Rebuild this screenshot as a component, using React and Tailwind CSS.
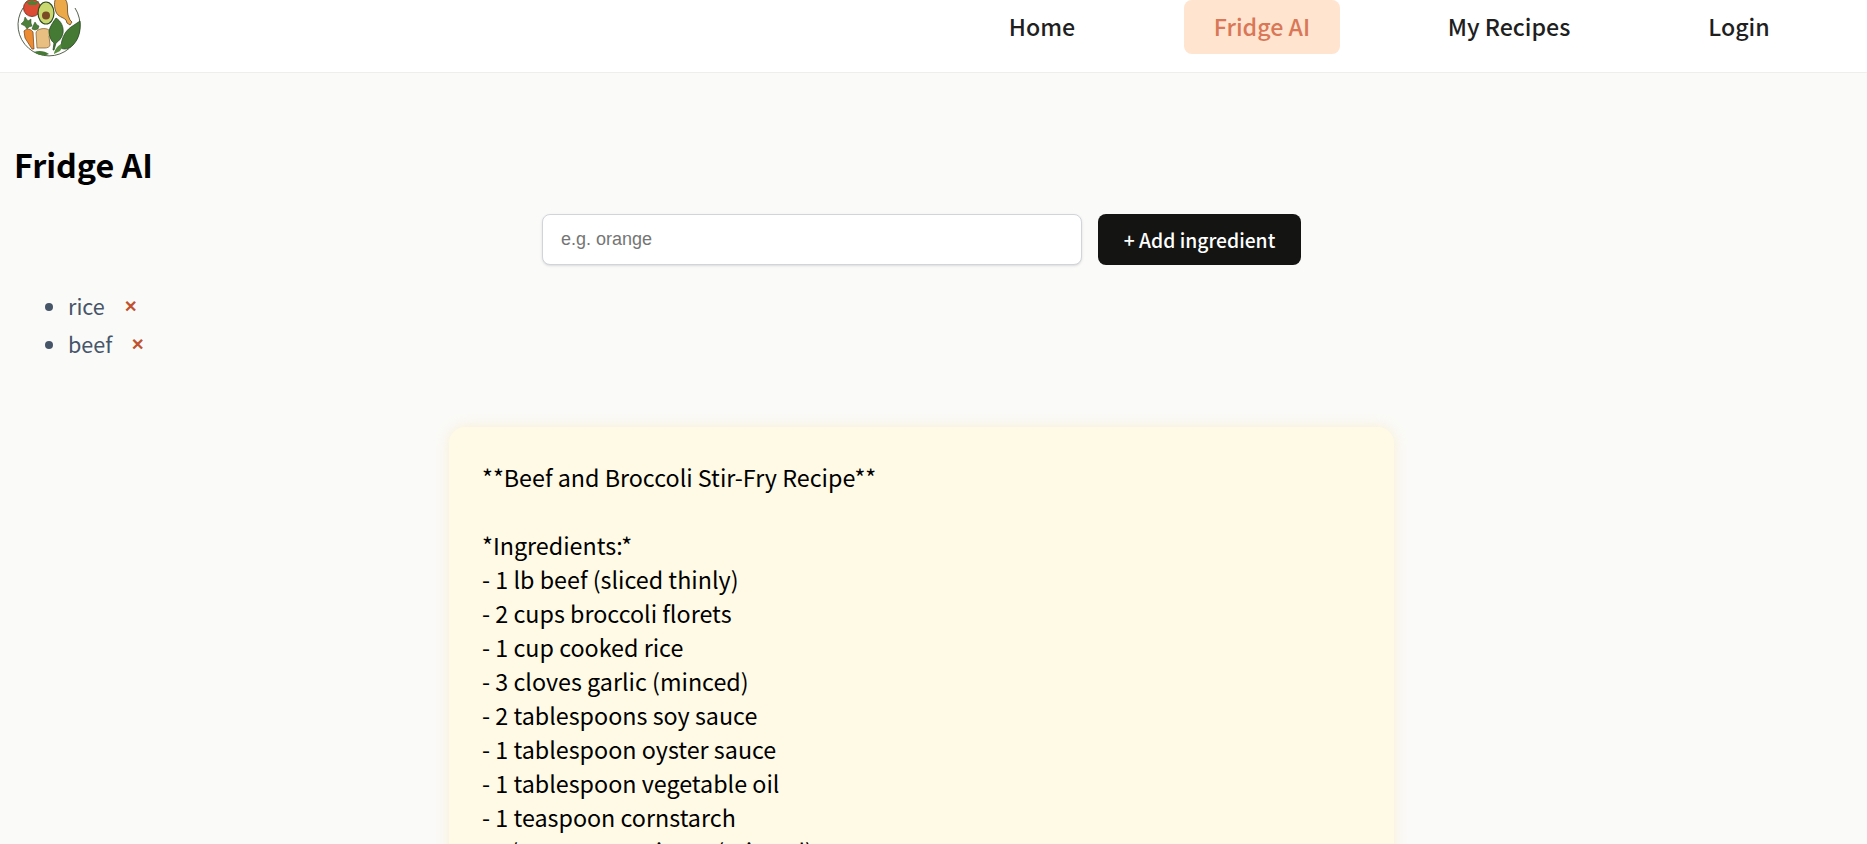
export default function App() {
  return (
    <div className="h-[844px] overflow-hidden bg-[#fafaf8] font-['Noto_Sans_CJK_JP',sans-serif]">
      <header className="flex h-[73px] items-start justify-between border-b border-[#eeeeec] bg-white pl-[16px]">
        <svg viewBox="16 0 66 60" className="h-[60px] w-[66px]">
          <path d="M23 8A31 31 0 1 0 75 8" fill="#fff" stroke="#3f4f36" strokeWidth="0.9" />
          <path d="M56 -2c5 -2 10 0 11 5 1 4 0 8 1 12l2 5 2 2-2 3-3-2-1-3c-3-3-8-3-10-8-2-5-2-11 0-14z" fill="#eca94a" stroke="#5b4426" strokeWidth=".8" />
          <circle cx="32" cy="8" r="8.5" fill="#dc4b34" stroke="#6b2b1c" strokeWidth=".8" />
          <path d="M26 1l4 1 2-3 2 3 5-1-3 4h-7z" fill="#4b8035" />
          <ellipse cx="46" cy="13" rx="8" ry="11" fill="#c9d86f" stroke="#2f4a22" strokeWidth="1.2" />
          <circle cx="46" cy="15.5" r="4" fill="#7a4a27" />
          <path d="M25 17l3 4 3-2 0 4 1 3-3 1-2 2-2-3-4-2 3-3z" fill="#4c7f39" stroke="#2f4a22" strokeWidth=".5" />
          <path d="M35 22l2 3 2 1-1 3-3 1-3-1 1-3z" fill="#4c7f39" stroke="#2f4a22" strokeWidth=".5" />
          <path d="M24 31c3-3 7-2 9 1l1 17-2 0-7-11z" fill="#ec8b32" stroke="#6b3d18" strokeWidth=".7" />
          <path d="M36 33c0-4 9-6 13-3 2 2 1 5 0 6l1 9c0 2-3 3-5 3l-8 0z" fill="#e8bf80" stroke="#7a5a30" strokeWidth=".7" />
          <path d="M56 18c5 3 8 9 7 15-1 5-4 8-7 10l-2 7-1 0 1-7c-3-2-5-7-5-12 1-5 5-10 7-13z" fill="#447a33" stroke="#24421c" strokeWidth=".7" />
          <path d="M80 21c1 9-1 18-7 24-4 4-9 5-12 3 0-8 3-16 10-21 3-2 6-4 9-6z" fill="#447a33" stroke="#24421c" strokeWidth=".7" />
          <path d="M61 44c1 2 1 5-1 7l-6 3c0-3 3-8 7-10z" fill="#5a9040" />
          <path d="M34 52c5-2 11-1 15 2-4 2-10 2-15-2z" fill="#447a33" />
        </svg>
        <nav className="flex items-start pr-[67px] text-[23.2px] font-medium text-[#1f1f1f]">
          <a className="flex h-[54px] w-[284px] items-center justify-center pb-[2px]">Home</a>
          <a className="flex h-[54px] w-[156px] items-center justify-center rounded-lg bg-[#ffe4d0] pb-[2px] text-[#d97757]">Fridge AI</a>
          <a className="flex h-[54px] w-[338px] items-center justify-center pb-[2px]">My Recipes</a>
          <a className="flex h-[54px] w-[122px] items-center justify-center pb-[2px]">Login</a>
        </nav>
      </header>
      <main className="pt-[67px]">
        <h1 className="pl-[14px] text-[32.3px] font-bold leading-[48px] text-black">Fridge AI</h1>
        <form className="ml-[542px] mt-[26px] flex gap-[16px]">
          <input readOnly placeholder="e.g. orange" className="h-[51px] w-[540px] rounded-lg border border-[#d1d5db] bg-white px-[18px] font-['Liberation_Sans',sans-serif] text-[18px] shadow-sm placeholder:text-[#757575]" />
          <button type="button" className="h-[51px] w-[203px] rounded-lg bg-[#141412] pt-[2px] text-[19.3px] font-medium text-white">+ Add ingredient</button>
        </form>
        <ul className="mt-[22px] list-disc pl-[68px] text-[21.6px] text-[#475569] marker:text-[#475569]">
          <li className="h-[38px] leading-[38px]"><span>rice</span><span className="ml-[19px] align-[3px] text-[16px] font-semibold leading-none text-[#c0522f]">✕</span></li>
          <li className="h-[38px] leading-[38px]"><span>beef</span><span className="ml-[19px] align-[3px] text-[16px] font-semibold leading-none text-[#c0522f]">✕</span></li>
        </ul>
        <section className="ml-[449px] mt-[64px] w-[945px] whitespace-pre-line rounded-2xl bg-[#fffae6] px-[33px] pt-[33px] pb-[34px] text-[23.3px] leading-[34px] text-black shadow-[0_0_14px_rgba(250,215,130,0.3)]">
{`**Beef and Broccoli Stir-Fry Recipe**

*Ingredients:*
- 1 lb beef (sliced thinly)
- 2 cups broccoli florets
- 1 cup cooked rice
- 3 cloves garlic (minced)
- 2 tablespoons soy sauce
- 1 tablespoon oyster sauce
- 1 tablespoon vegetable oil
- 1 teaspoon cornstarch
- 1/2 teaspoon ginger (minced)`}
        </section>
      </main>
    </div>
  );
}
